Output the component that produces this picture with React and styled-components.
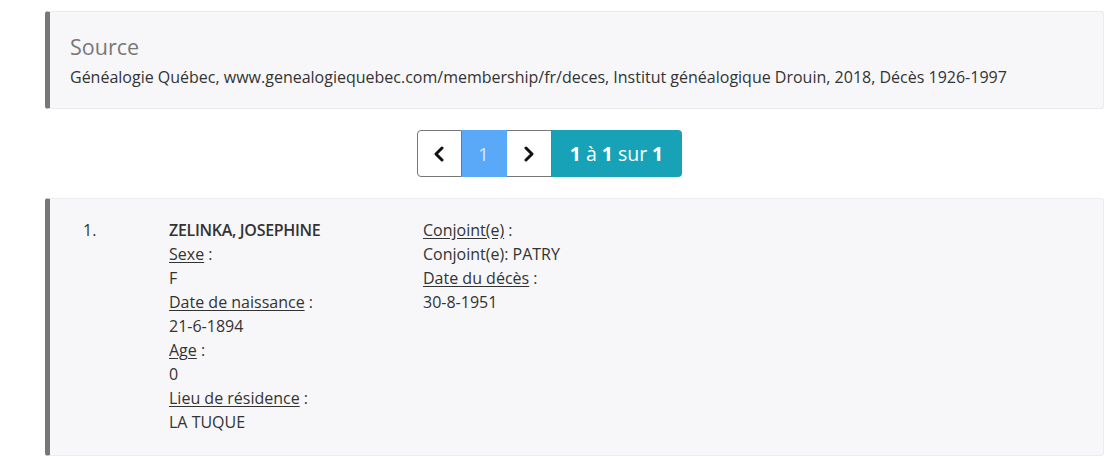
import styled, { createGlobalStyle } from 'styled-components';

const GlobalStyle = createGlobalStyle`
  body {
    margin: 0;
    font-family: "Open Sans", "Liberation Sans", sans-serif;
    color: #333;
    background: #fff;
  }
`;

const fields = [
  [
    { label: 'Sexe', value: 'F' },
    { label: 'Date de naissance', value: '21-6-1894' },
    { label: 'Age', value: '0' },
    { label: 'Lieu de résidence', value: 'LA TUQUE' },
  ],
  [
    { label: 'Conjoint(e)', value: 'Conjoint(e): PATRY' },
    { label: 'Date du décès', value: '30-8-1951' },
  ],
];

function Chevron({ dir }) {
  const pts = dir === 'left' ? '9,2 3,8 9,14' : '3,2 9,8 3,14';
  return (
    <svg width="12" height="16" viewBox="0 0 12 16">
      <polyline points={pts} fill="none" stroke="#111" strokeWidth="3" strokeLinecap="round" strokeLinejoin="round" />
    </svg>
  );
}

export default function App() {
  return (
    <>
      <GlobalStyle />
      <Page>
        <SourceBox>
          <Heading>Source</Heading>
          <SourceText>
            Généalogie Québec, www.genealogiequebec.com/membership/fr/deces, Institut généalogique Drouin, 2018, Décès 1926-1997
          </SourceText>
        </SourceBox>

        <PagerRow>
          <Pager>
            <PageButton $first>
              <Chevron dir="left" />
            </PageButton>
            <PageButton $active>1</PageButton>
            <PageButton>
              <Chevron dir="right" />
            </PageButton>
            <Count>
              <b>1</b> à <b>1</b> sur <b>1</b>
            </Count>
          </Pager>
        </PagerRow>

        <Card>
          <Num>1.</Num>
          <Column>
            <Name>ZELINKA, JOSEPHINE</Name>
            {fields[0].map((f) => (
              <Field key={f.label}>
                <Line>
                  <Label>{f.label}</Label> :
                </Line>
                <Line>{f.value}</Line>
              </Field>
            ))}
          </Column>
          <Column>
            {fields[1].map((f) => (
              <Field key={f.label}>
                <Line>
                  <Label>{f.label}</Label> :
                </Line>
                <Line>{f.value}</Line>
              </Field>
            ))}
          </Column>
        </Card>
      </Page>
    </>
  );
}

const Page = styled.div`
  padding: 11px 5px 0 45px;
`;

const SourceBox = styled.div`
  box-sizing: border-box;
  height: 98px;
  padding: 22px 20px 0 20px;
  background: #f7f7f9;
  border: 1px solid #ececec;
  border-left: 5px solid #777;
  border-radius: 3px;
`;

const Heading = styled.h4`
  margin: 0 0 6px;
  font-size: 21.5px;
  font-weight: 400;
  line-height: 26px;
  color: #777;
`;

const SourceText = styled.p`
  margin: 0;
  font-size: 16px;
  line-height: 22px;
  color: #333;
`;

const PagerRow = styled.div`
  display: flex;
  justify-content: center;
  padding: 21px 51px 21px 0;
`;

const Pager = styled.div`
  display: flex;
  height: 47px;
`;

const PageButton = styled.div`
  box-sizing: border-box;
  width: 45px;
  display: flex;
  align-items: center;
  justify-content: center;
  font-size: 19px;
  border: 1px solid #777;
  border-left: ${(p) => (p.$first ? '1px solid #777' : 'none')};
  border-radius: ${(p) => (p.$first ? '4px 0 0 4px' : '0')};
  background: ${(p) => (p.$active ? '#5aa8f8' : '#fff')};
  color: ${(p) => (p.$active ? '#d6e9fd' : '#111')};
  border-color: ${(p) => (p.$active ? '#5aa8f8 #5aa8f8 #5aa8f8 #777' : '#777')};
`;

const Count = styled.div`
  width: 130px;
  display: flex;
  align-items: center;
  justify-content: center;
  gap: 5px;
  background: #17a2b8;
  color: #fff;
  font-size: 19.5px;
  border-radius: 0 4px 4px 0;

  b {
    font-weight: 700;
  }
`;

const Card = styled.div`
  box-sizing: border-box;
  display: flex;
  min-height: 258px;
  padding: 19px 20px 21px 33px;
  background: #f7f7f9;
  border: 1px solid #ececec;
  border-left: 5px solid #777;
  border-radius: 3px;
  font-size: 16px;
  line-height: 24px;
`;

const Num = styled.div`
  width: 86px;
`;

const Column = styled.div`
  width: 254px;
`;

const Name = styled.div`
  font-size: 16px;
  font-weight: 600;
  letter-spacing: -0.3px;
`;

const Field = styled.div``;

const Line = styled.div``;

const Label = styled.span`
  text-decoration: underline;
  text-underline-offset: 2px;
`;
